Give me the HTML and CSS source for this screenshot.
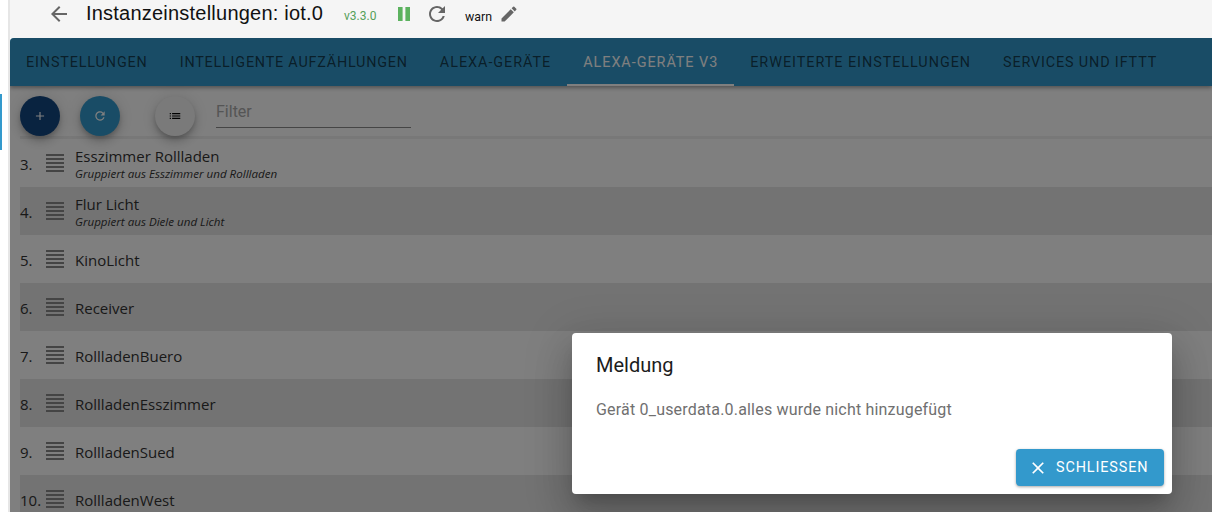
FILE: index.html
```html
<!DOCTYPE html>
<html lang="de">
<head>
<meta charset="utf-8">
<title>Instanzeinstellungen</title>
<link rel="stylesheet" href="styles.css">
</head>
<body>
<div class="page">
  <aside class="rail"><span class="rail-mark"></span></aside>
  <div class="main">
    <header class="head">
      <svg class="ic back" viewBox="0 0 24 24"><path d="M20 11H7.83l5.59-5.59L12 4l-8 8 8 8 1.41-1.41L7.83 13H20z"/></svg>
      <h1 class="title">Instanzeinstellungen: iot.0</h1>
      <span class="version">v3.3.0</span>
      <svg class="ic pause" viewBox="0 0 12 14"><path d="M0 0h4.6v14H0zM7.4 0H12v14H7.4z"/></svg>
      <svg class="ic reload" viewBox="0 0 24 24"><path d="M17.65 6.35A7.958 7.958 0 0 0 12 4c-4.42 0-7.99 3.58-7.99 8s3.57 8 7.99 8c3.73 0 6.84-2.55 7.73-6h-2.08A5.99 5.99 0 0 1 12 18c-3.31 0-6-2.69-6-6s2.69-6 6-6c1.66 0 3.14.69 4.22 1.78L13 11h7V4l-2.35 2.35z"/></svg>
      <span class="level">warn</span>
      <svg class="ic pencil" viewBox="0 0 24 24"><path d="M3 17.25V21h3.75L17.81 9.94l-3.75-3.75L3 17.25zM20.71 7.04a1 1 0 0 0 0-1.41l-2.34-2.34a1 1 0 0 0-1.41 0l-1.83 1.83 3.75 3.75 1.83-1.83z"/></svg>
    </header>
    <div class="panel">
      <nav class="tabs">
        <a class="tab">Einstellungen</a>
        <a class="tab tab-narrow">Intelligente Aufzählungen</a>
        <a class="tab tab-wide">Alexa-Geräte</a>
        <a class="tab tab-wide active">Alexa-Geräte v3</a>
        <a class="tab tab-wide">Erweiterte Einstellungen</a>
        <a class="tab">Services und IFTTT</a>
      </nav>
      <div class="toolbar">
        <button class="fab fab-add"><svg viewBox="0 0 24 24"><path d="M19 13h-6v6h-2v-6H5v-2h6V5h2v6h6z"/></svg></button>
        <button class="fab fab-reload"><svg viewBox="0 0 24 24"><path d="M17.65 6.35A7.958 7.958 0 0 0 12 4c-4.42 0-7.99 3.58-7.99 8s3.57 8 7.99 8c3.73 0 6.84-2.55 7.73-6h-2.08A5.99 5.99 0 0 1 12 18c-3.31 0-6-2.69-6-6s2.69-6 6-6c1.66 0 3.14.69 4.22 1.78L13 11h7V4l-2.35 2.35z"/></svg></button>
        <button class="fab fab-list"><svg viewBox="0 0 24 24"><path d="M3 13h2v-2H3v2zm0 4h2v-2H3v2zm0-8h2V7H3v2zm4 4h14v-2H7v2zm0 4h14v-2H7v2zM7 7v2h14V7H7z"/></svg></button>
        <label class="filter">Filter</label>
      </div>
      <ul class="list">
        <li class="row"><span class="num">3.</span><span class="bars"></span><div class="txt"><div class="name">Esszimmer Rollladen</div><div class="sub">Gruppiert aus Esszimmer und Rollladen</div></div></li>
        <li class="row"><span class="num">4.</span><span class="bars"></span><div class="txt"><div class="name">Flur Licht</div><div class="sub">Gruppiert aus Diele und Licht</div></div></li>
        <li class="row"><span class="num">5.</span><span class="bars"></span><div class="txt"><div class="name">KinoLicht</div></div></li>
        <li class="row"><span class="num">6.</span><span class="bars"></span><div class="txt"><div class="name">Receiver</div></div></li>
        <li class="row"><span class="num">7.</span><span class="bars"></span><div class="txt"><div class="name">RollladenBuero</div></div></li>
        <li class="row"><span class="num">8.</span><span class="bars"></span><div class="txt"><div class="name">RollladenEsszimmer</div></div></li>
        <li class="row"><span class="num">9.</span><span class="bars"></span><div class="txt"><div class="name">RollladenSued</div></div></li>
        <li class="row"><span class="num">10.</span><span class="bars"></span><div class="txt"><div class="name">RollladenWest</div></div></li>
      </ul>
      <div class="scrim"></div>
    </div>
  </div>
  <section class="dialog">
    <h2 class="dlg-title">Meldung</h2>
    <p class="dlg-text">Gerät 0_userdata.0.alles wurde nicht hinzugefügt</p>
    <div class="dlg-actions">
      <button class="dlg-btn"><svg viewBox="0 0 24 24"><path d="M19 6.41 17.59 5 12 10.59 6.41 5 5 6.41 10.59 12 5 17.59 6.41 19 12 13.41 17.59 19 19 17.59 13.41 12z"/></svg>Schliessen</button>
    </div>
  </section>
</div>
</body>
</html>
```
FILE: styles.css
```css
* { box-sizing: border-box; }
html, body { margin: 0; height: 100%; overflow: hidden; background: #fff; }
body { font-family: Roboto, "Liberation Sans", sans-serif; }
.page { display: flex; height: 512px; position: relative; overflow: hidden; }
.rail { width: 10px; flex: none; background: #fff; border-right: 2px solid #e6e6e6; position: relative; }
.rail-mark { position: absolute; left: 0; top: 94px; width: 2px; height: 56px; background: #3399cc; }
.main { flex: 1; min-width: 0; display: flex; flex-direction: column; }
.head { height: 38px; flex: none; background: #f5f5f5; display: flex; align-items: center; }
.ic { flex: none; display: block; }
.back { width: 24px; height: 24px; fill: #666; margin-left: 37px; margin-top: -10px; }
.title { margin: -11px 0 0 15px; font: 400 20px "Liberation Sans", Arial, sans-serif; letter-spacing: .22px; color: #111; width: 258px; white-space: nowrap; }
.version { font-size: 12px; color: #55a058; width: 54px; margin-top: -6px; }
.pause { width: 12px; height: 14px; fill: #5cb25f; margin-top: -10px; }
.reload { width: 24px; height: 24px; fill: #666; margin: -10px 0 0 15px; }
.level { font-size: 12.4px; color: #111; margin: -6px 0 0 16px; }
.pencil { width: 20px; height: 20px; fill: #666; margin: -11px 0 0 7px; }
.panel { flex: 1; min-height: 0; position: relative; background: #fff; overflow: hidden; border-radius: 4px 0 0 0; }
.scrim { position: absolute; inset: 0; z-index: 2; background: rgba(0, 0, 0, .5); }
.tabs { height: 48px; display: flex; background: #3399cc; box-shadow: 0 2px 4px rgba(0, 0, 0, .35); position: relative; z-index: 1; }
.tab { padding: 0 16px; line-height: 49px; font-size: 14.4px; letter-spacing: .85px; text-transform: uppercase; color: rgba(0, 0, 0, .62); white-space: nowrap; }
.tab-narrow { letter-spacing: .78px; }
.tab-wide { letter-spacing: .96px; }
.tab.active { color: #fff; border-bottom: 2px solid #fff; }
.toolbar { height: 53px; margin-left: 10px; display: flex; align-items: flex-start; padding-top: 10px; border-bottom: 3px solid #f0f0f0; }
.fab { width: 40px; height: 40px; border: 0; border-radius: 50%; padding: 0; display: flex; align-items: center; justify-content: center; box-shadow: 0 3px 5px -1px rgba(0,0,0,.2), 0 6px 10px 0 rgba(0,0,0,.14), 0 1px 18px 0 rgba(0,0,0,.12); flex: none; }
.fab svg { width: 14px; height: 14px; }
.fab-add { background: #124680; fill: #fff; }
.fab-reload { background: #3399cc; fill: #fff; margin-left: 20px; }
.fab-list { background: #f4f4f4; fill: #000; margin-left: 35px; }
.filter { width: 195px; height: 32px; margin: 0 0 0 21px; border-bottom: 1px solid #8a8a8a; font-size: 16px; color: #aaa; line-height: 32px; }
.list { list-style: none; margin: 0 0 0 10px; padding: 0; }
.row { height: 48px; display: flex; align-items: center; font-family: "Open Sans", sans-serif; color: #333; }
.row:nth-child(even) { background: #e6e6e6; }
.num { width: 26px; font-size: 15px; white-space: nowrap; position: relative; top: 1px; }
.bars { width: 18px; height: 18px; flex: none; margin-right: 11px; background: repeating-linear-gradient(#888 0 2px, transparent 2px 4px); }
.name { font-size: 15px; line-height: 20px; }
.name:only-child { position: relative; top: 1px; }
.sub { font-size: 11.6px; font-style: italic; line-height: 15px; }
.dialog { position: absolute; z-index: 3; left: 572px; top: 333px; width: 600px; height: 161px; background: #fff; border-radius: 4px; box-shadow: 0 11px 15px -7px rgba(0,0,0,.2), 0 24px 38px 3px rgba(0,0,0,.14), 0 9px 46px 8px rgba(0,0,0,.12); display: flex; flex-direction: column; padding: 16px 8px 8px 24px; }
.dlg-title { margin: 0; font-size: 20px; font-weight: 400; line-height: 32px; color: #1c1c1c; }
.dlg-text { margin: 17px 0 0; font-size: 16px; letter-spacing: .19px; line-height: 24px; color: #707070; flex: 1; }
.dlg-actions { display: flex; justify-content: flex-end; }
.dlg-btn { width: 148px; height: 37px; border: 0; border-radius: 4px; background: #3399cc; color: #fff; font: 400 14.4px Roboto, sans-serif; letter-spacing: .88px; text-transform: uppercase; display: flex; align-items: center; gap: 8px; padding: 0 0 0 12px; box-shadow: 0 1px 3px rgba(0,0,0,.35); }
.dlg-btn svg { width: 20px; height: 20px; fill: #fff; flex: none; }
```
